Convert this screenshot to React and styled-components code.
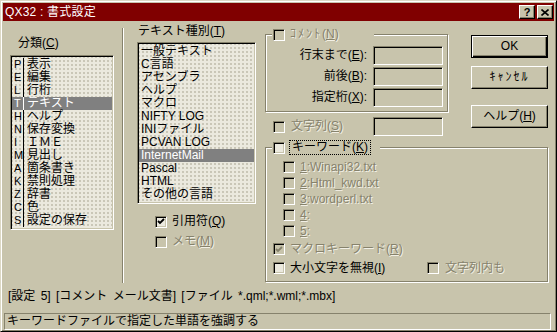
import React from 'react';
import styled, { createGlobalStyle, css } from 'styled-components';

const FACE = '#c8c4ac';
const SHADE = '#86826c';
const FIELD = '#ebe9de';
const FONT = `"Liberation Sans", "Noto Sans CJK JP", sans-serif`;

const GlobalStyle = createGlobalStyle`
  html, body { margin: 0; padding: 0; background: ${FACE}; }
  body { font-family: ${FONT}; font-size: 12px; line-height: 13px; color: #000; }
  * { box-sizing: border-box; }
  u { text-underline-offset: 1px; }
`;

// 凹んだ枠（リスト・テキスト欄・チェックボックス共通）
const sunken = css`
  border: 1px solid;
  border-color: ${SHADE} #fff #fff ${SHADE};
  box-shadow: inset 1px 1px 0 #000, inset -1px -1px 0 ${FACE};
`;

const dotted = css`
  background-color: ${FIELD};
  background-image: radial-gradient(circle at 1px 1px, #c9c6b6 0.7px, transparent 0.9px);
  background-size: 4px 4px;
`;

const Window = styled.div`
  width: 557px;
  height: 332px;
  background: ${FACE};
  border: 1px solid;
  border-color: #dcd8c4 #000 #000 #dcd8c4;
  box-shadow: inset 1px 1px 0 #fff, inset -1px -1px 0 ${SHADE};
  padding: 2px 2px 1px 2px;
  display: flex;
  flex-direction: column;
`;

const TitleBar = styled.div`
  height: 18px;
  flex: none;
  background: #800000;
  color: #fff;
  display: flex;
  align-items: center;
  justify-content: space-between;
  padding: 0 1px 0 2px;
`;

const TitleText = styled.span`
  font-size: 12px;
  letter-spacing: 0.2px;
`;

const TitleButtons = styled.div`
  display: flex;
  gap: 2px;
`;

const TitleButton = styled.span`
  width: 16px;
  height: 14px;
  background: ${FACE};
  border: 1px solid;
  border-color: #fff #000 #000 #fff;
  box-shadow: inset -1px -1px 0 ${SHADE};
  color: #000;
  font-weight: bold;
  font-size: 11px;
  line-height: 12px;
  display: flex;
  align-items: center;
  justify-content: center;
`;

const Body = styled.div`
  height: 263px;
  flex: none;
  display: flex;
  align-items: flex-start;
`;

const LeftPane = styled.div`
  width: 119px;
  flex: none;
  padding-top: 16px;
`;

const MiddlePane = styled.div`
  width: 139px;
  flex: none;
  padding-top: 4px;
`;

const Divider = styled.div`
  width: 2px;
  height: 255px;
  margin-top: 7px;
  flex: none;
  border-left: 1px solid ${SHADE};
  border-right: 1px solid #fff;
`;

const PaneLabel = styled.div`
  padding-left: ${(p) => p.$indent}px;
  height: 13px;
`;

const ListBox = styled.div`
  ${sunken};
  ${dotted};
  width: ${(p) => p.$width}px;
  margin: ${(p) => p.$top}px 0 0 ${(p) => p.$left}px;
  padding: 2px 1px 2px 1px;
`;

const ListItem = styled.div`
  height: 13px;
  display: flex;
  align-items: center;
  padding-left: ${(p) => p.$pad}px;
  white-space: nowrap;
  background: ${(p) => (p.$selected ? '#808080' : 'transparent')};
  color: ${(p) => (p.$selected ? '#fff' : '#000')};
`;

const KeyLetter = styled.span`
  width: 12px;
  height: 13px;
  flex: none;
  padding-left: 2px;
  border-right: 1px solid currentColor;
  margin-right: 3px;
  font-size: 11px;
`;

const Checks = styled.div`
  padding-left: 31px;
  margin-top: 11px;
  display: flex;
  flex-direction: column;
  gap: 7px;
`;

const CheckRow = styled.label`
  display: flex;
  align-items: center;
  gap: ${(p) => p.$gap ?? 5}px;
  height: ${(p) => p.$h ?? 13}px;
  padding-left: ${(p) => p.$indent ?? 0}px;
  width: ${(p) => (p.$width ? `${p.$width}px` : 'auto')};
  flex: none;
  white-space: nowrap;
`;

const Box = styled.span`
  ${sunken};
  width: 12px;
  height: 12px;
  flex: none;
  display: flex;
  align-items: center;
  justify-content: center;
  background: ${(p) => (p.$enabled ? FIELD : FACE)};
`;

const Label = styled.span`
  color: ${(p) => (p.$disabled ? SHADE : '#000')};
  text-shadow: ${(p) => (p.$disabled ? '1px 1px 0 #f2f0e6' : 'none')};
`;

const FocusLabel = styled(Label)`
  outline: 1px dotted #000;
  outline-offset: 0;
  padding: 0 2px;
`;

// 半角カナ（元の画面では少し字間が広い）
const Hankaku = styled.span`
  letter-spacing: 2px;
`;

const RightPane = styled.div`
  width: 283px;
  flex: none;
  margin-left: 2px;
`;

const TopRow = styled.div`
  display: flex;
  align-items: flex-start;
`;

const OptionsCol = styled.div`
  width: 183px;
  flex: none;
  margin-top: 7px;
`;

const KeywordBlock = styled.div`
  margin-top: 5px;
`;

const Group = styled.fieldset`
  margin: 0;
  padding: 0 0 ${(p) => p.$bottom}px 0;
  min-width: 0;
  border: 1px solid ${SHADE};
  box-shadow: inset 1px 1px 0 #fff, 1px 1px 0 #fff;
  width: ${(p) => p.$width}px;
`;

const Legend = styled.legend`
  margin-left: 6px;
  padding: 0 0 0 1px;
  width: ${(p) => p.$width}px;
  height: 13px;
  background: ${FACE};
  display: flex;
  align-items: center;
  gap: 5px;
`;

const FieldRows = styled.div`
  display: flex;
  flex-direction: column;
  gap: 2px;
  padding: 5px 4px 0 0;
`;

const FieldRow = styled.div`
  display: flex;
  align-items: center;
  justify-content: flex-end;
  gap: 6px;
  height: 19px;
`;

const TextBox = styled.div`
  ${sunken};
  width: 70px;
  height: 19px;
  background: ${FACE};
`;

const StringRow = styled.div`
  display: flex;
  align-items: center;
  justify-content: space-between;
  height: 19px;
  margin-top: 5px;
  padding: 0 5px 0 8px;
`;

const ButtonCol = styled.div`
  margin: 14px 0 0 23px;
  width: 77px;
  display: flex;
  flex-direction: column;
`;

const Button = styled.div`
  height: 23px;
  margin-top: ${(p) => p.$gap ?? 0}px;
  display: flex;
  align-items: center;
  justify-content: center;
  border: 1px solid;
  border-color: ${(p) => (p.$default ? '#000' : '#fff #000 #000 #fff')};
  box-shadow: ${(p) =>
    p.$default
      ? `inset 1px 1px 0 #fff, inset -1px -1px 0 #000, inset -2px -2px 0 ${SHADE}`
      : `inset -1px -1px 0 ${SHADE}`};
`;

const KeywordList = styled.div`
  display: flex;
  flex-direction: column;
  padding-top: 5px;
`;

const OptionRow = styled.div`
  display: flex;
  margin-top: ${(p) => p.$gap}px;
`;

const InfoLine = styled.div`
  margin-top: 6px;
  height: 14px;
  padding-left: 5px;
  white-space: nowrap;
  word-spacing: 2px;
`;

const StatusBar = styled.div`
  margin: 9px 3px 0 1px;
  height: 17px;
  border: 1px solid;
  border-color: ${SHADE} #fff #fff ${SHADE};
  padding: 1px 0 0 2px;
  white-space: nowrap;
`;

const CheckMark = ({ disabled }) => (
  <svg width="8" height="7" viewBox="0 0 8 7">
    <path d="M1 3 L3 5 L7 1" fill="none" stroke={disabled ? SHADE : '#000'} strokeWidth="1.8" />
  </svg>
);

const Check = ({ checked, enabled, disabled, children, ...rest }) => (
  <CheckRow {...rest}>
    <Box $enabled={enabled}>{checked && <CheckMark disabled={disabled} />}</Box>
    <Label $disabled={disabled}>{children}</Label>
  </CheckRow>
);

const categories = [
  ['P', '表示'], ['E', '編集'], ['L', '行桁'], ['T', 'テキスト'], ['H', 'ヘルプ'],
  ['N', '保存変換'], ['I', 'ＩＭＥ'], ['M', '見出し'], ['A', '箇条書き'], ['K', '禁則処理'],
  ['Z', '辞書'], ['C', '色'], ['S', '設定の保存'],
];

const textKinds = [
  '一般テキスト', 'C言語', 'アセンブラ', 'ヘルプ', 'マクロ', 'NIFTY LOG', 'INIファイル',
  'PCVAN LOG', 'InternetMail', 'Pascal', 'HTML', 'その他の言語',
];

const keywordFiles = [
  ['1', ':Winapi32.txt'], ['2', ':Html_kwd.txt'], ['3', ':wordperl.txt'], ['4', ':'], ['5', ':'],
];

const commentFields = [
  ['行末まで', 'E'],
  ['前後', 'B'],
  ['指定桁', 'X'],
];

export default function App() {
  return (
    <>
      <GlobalStyle />
      <Window>
        <TitleBar>
          <TitleText>QX32 : 書式設定</TitleText>
          <TitleButtons>
            <TitleButton>?</TitleButton>
            <TitleButton>
              <svg width="8" height="7" viewBox="0 0 8 7">
                <path d="M0.5 0.5 L7.5 6.5 M7.5 0.5 L0.5 6.5" stroke="#000" strokeWidth="1.6" />
              </svg>
            </TitleButton>
          </TitleButtons>
        </TitleBar>

        <Body>
          <LeftPane>
            <PaneLabel $indent={15}>分類(<u>C</u>)</PaneLabel>
            <ListBox $width={104} $left={7} $top={5}>
              {categories.map(([key, name]) => (
                <ListItem key={key} $pad={0} $selected={key === 'T'}>
                  <KeyLetter>{key}</KeyLetter>
                  <span>{name}</span>
                </ListItem>
              ))}
            </ListBox>
          </LeftPane>

          <Divider />

          <MiddlePane>
            <PaneLabel $indent={14}>テキスト種別(<u>T</u>)</PaneLabel>
            <ListBox $width={119} $left={13} $top={4}>
              {textKinds.map((kind) => (
                <ListItem key={kind} $pad={2} $selected={kind === 'InternetMail'}>
                  {kind}
                </ListItem>
              ))}
            </ListBox>
            <Checks>
              <Check checked enabled>
                引用符(<u>Q</u>)
              </Check>
              <Check disabled>
                メモ(<u>M</u>)
              </Check>
            </Checks>
          </MiddlePane>

          <RightPane>
            <TopRow>
              <OptionsCol>
                <Group $width={183} $bottom={4}>
                  <Legend $width={102}>
                    <Box />
                    <Label $disabled>
                      <Hankaku>ｺﾒﾝﾄ</Hankaku>(<u>N</u>)
                    </Label>
                  </Legend>
                  <FieldRows>
                    {commentFields.map(([name, key]) => (
                      <FieldRow key={key}>
                        <span>
                          {name}(<u>{key}</u>):
                        </span>
                        <TextBox />
                      </FieldRow>
                    ))}
                  </FieldRows>
                </Group>
                <StringRow>
                  <Check disabled $gap={6}>
                    文字列(<u>S</u>)
                  </Check>
                  <TextBox />
                </StringRow>
              </OptionsCol>
              <ButtonCol>
                <Button $default>OK</Button>
                <Button $gap={8}>
                  <Hankaku>ｷｬﾝｾﾙ</Hankaku>
                </Button>
                <Button $gap={16}>
                  <span>
                    ヘルプ(<u>H</u>)
                  </span>
                </Button>
              </ButtonCol>
            </TopRow>

            <KeywordBlock>
              <Group $width={283} $bottom={5}>
                <Legend $width={108}>
                  <Box $enabled />
                  <FocusLabel>
                    キーワード(<u>K</u>)
                  </FocusLabel>
                </Legend>
                <KeywordList>
                  {keywordFiles.map(([n, name]) => (
                    <Check key={n} disabled $indent={17} $h={16}>
                      <u>{n}</u>
                      {name}
                    </Check>
                  ))}
                  <OptionRow $gap={2}>
                    <Check checked disabled $indent={7} $h={16}>
                      マクロキーワード(<u>R</u>)
                    </Check>
                  </OptionRow>
                  <OptionRow $gap={3}>
                    <Check enabled $indent={7} $h={16} $width={161}>
                      大小文字を無視(<u>I</u>)
                    </Check>
                    <Check disabled $h={16} $gap={6}>
                      文字列内も
                    </Check>
                  </OptionRow>
                </KeywordList>
              </Group>
            </KeywordBlock>
          </RightPane>
        </Body>

        <InfoLine>[設定 5] [コメント メール文書] [ファイル *.qml;*.wml;*.mbx]</InfoLine>
        <StatusBar>キーワードファイルで指定した単語を強調する</StatusBar>
      </Window>
    </>
  );
}
